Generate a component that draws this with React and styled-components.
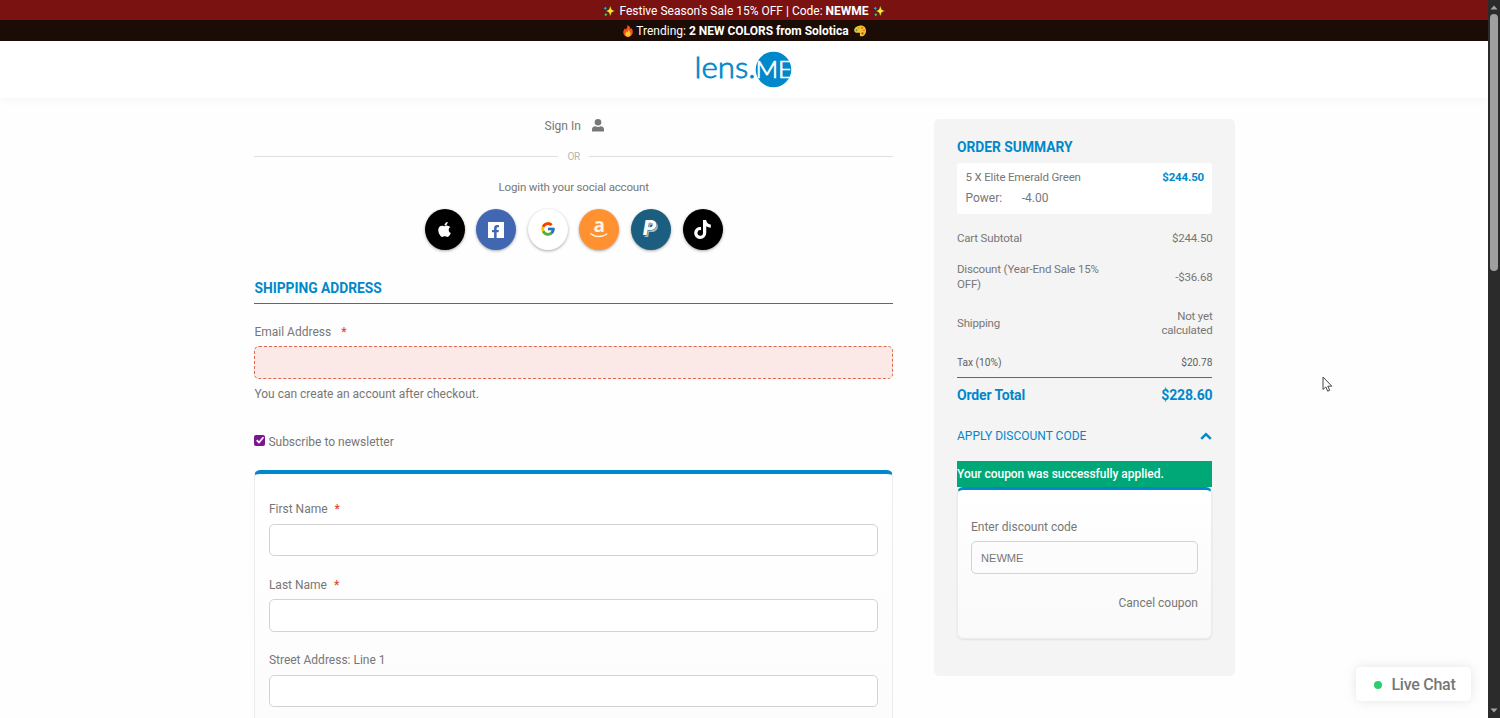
import styled, { createGlobalStyle } from "styled-components";
import { FaApple, FaFacebookF, FaTiktok } from "react-icons/fa";
import { FcGoogle } from "react-icons/fc";

const BLUE = "#0088cc";

const addressFields = [
  { label: "First Name", required: true },
  { label: "Last Name", required: true },
  { label: "Street Address: Line 1", required: false },
];

const socials = [
  { name: "apple", bg: "#000", icon: <FaApple size={17} /> },
  {
    name: "facebook",
    bg: "#4267b2",
    icon: (
      <FacebookTile>
        <FaFacebookF size={13} />
      </FacebookTile>
    ),
  },
  { name: "google", bg: "#fff", icon: <FcGoogle size={16} /> },
  { name: "amazon", bg: "#ff9130", icon: <AmazonIcon /> },
  { name: "paypal", bg: "#1b5e80", icon: <PaypalIcon /> },
  { name: "tiktok", bg: "#000", icon: <FaTiktok size={19} /> },
];

function FacebookTile({ children }) {
  return <FacebookBox>{children}</FacebookBox>;
}

function AmazonIcon() {
  return (
    <svg width="20" height="36" viewBox="0 -6 20 36" fontFamily="Open Sans" fontWeight="700" fontSize="19">
      <text x="4.500" y="14.500" fill="#fff3e2">a</text>
      <path d="M1.800 16.800c5 3.400 11 3.400 15.800.3" fill="none" stroke="#fff3e2" strokeWidth="1.400" strokeLinecap="round" />
    </svg>
  );
}

function PaypalIcon() {
  return (
    <svg width="28" height="28" viewBox="0 0 28 28" fontFamily="Roboto" fontWeight="900" fontStyle="italic" fontSize="21">
      <text x="7.500" y="21.500" fill="#9fbccb">P</text>
      <text x="6" y="20" fill="#fff" stroke="#1b5e80" strokeWidth=".8" paintOrder="stroke">P</text>
    </svg>
  );
}

function Sparkles() {
  return (
    <Emoji viewBox="0 0 12 12">
      <path d="M7.300.6 8.700 4.500 12 6 8.700 7.500 7.300 11.600 5.900 7.500 2.800 6 5.900 4.500Z" fill="#ffe53b" stroke="#3a2a05" strokeWidth=".5" />
      <path d="M2.300.8 3 2.500l1.600.8L3 4.100 2.300 5.800l-.7-1.700L0 3.300l1.600-.8Z" fill="#3fa9e8" stroke="#10222e" strokeWidth=".4" />
      <path d="M2.800 7.400 3.500 9l1.400.7-1.400.7-.7 1.600-.7-1.600L.7 9.700 2.100 9Z" fill="#5fd07a" stroke="#10281a" strokeWidth=".4" />
    </Emoji>
  );
}

function Flame() {
  return (
    <Emoji viewBox="0 0 12 12">
      <path d="M5.200 0C8 1.200 8.600 3 8.400 4.300c.5-.2.800-.7.900-1.300C10.600 4.500 11 6 10.700 7.700 10.300 10.300 8.400 12 6 12S1.500 10.400 1.300 7.800C1.100 5.700 2.200 4.500 2.900 3.200c.3.600.4 1 .9 1.300C4.900 3.300 5.700 2 5.200 0Z" fill="#f4511e" />
      <path d="M6.200 5c1.500 1.300 2.600 2.500 2.400 4.200C8.400 10.800 7.400 11.700 6 11.700S3.500 10.700 3.400 9.200C3.300 7.900 4.200 7.300 4.500 6.500c.4.300.6.600.7 1C5.900 6.800 6.300 6 6.200 5Z" fill="#ffca28" />
    </Emoji>
  );
}

function Palette() {
  return (
    <Emoji viewBox="0 0 12 12">
      <path d="M5.500.7C9 .2 12 2.200 12 5.700c0 3.300-2.100 5.600-4.400 5.600-1.500 0-2-.9-1.600-2.100.3-1-.2-1.700-1.200-1.500C3.200 8 .3 8.200.2 5.600.1 3 2.600 1.100 5.500.7Z" fill="#fbc02d" />
      <circle cx="2.600" cy="5.200" r="1" fill="#43a047" />
      <circle cx="4.600" cy="2.900" r="1" fill="#8bc34a" />
      <circle cx="8" cy="2.900" r=".9" fill="#f4511e" />
      <circle cx="10" cy="5.300" r=".9" fill="#ef6c00" />
      <circle cx="8.500" cy="8.400" r="1.100" fill="#8d5a00" />
    </Emoji>
  );
}

function Logo() {
  return (
    <svg width="104" height="38" viewBox="-4 0 104 38" fontFamily="Lato" fontWeight="300">
      <circle cx="77.500" cy="18.500" r="17.800" fill={BLUE} />
      <text x="-1.500" y="27.400" fontSize="30" textLength="61" lengthAdjust="spacingAndGlyphs" fill={BLUE} stroke={BLUE} strokeWidth=".8">
        lens.
      </text>
      <text x="59.500" y="26.800" fontSize="23.500" textLength="37" lengthAdjust="spacingAndGlyphs" fill="#fff" stroke="#fff" strokeWidth=".7">
        ME
      </text>
    </svg>
  );
}

function TextField({ label, required, invalid }) {
  return (
    <Field>
      <Label>
        {label}
        {required && <Star $gap={invalid ? 10 : 7}>*</Star>}
      </Label>
      <Input $invalid={invalid} />
    </Field>
  );
}

function App() {
  return (
    <>
      <GlobalStyle />
      <Window>
        <Page>
          <Banner $bg="#7a1212" $height={20}>
            <Sparkles />
            <BannerText>
              Festive Season's Sale 15% OFF | Code: <b>NEWME</b>
            </BannerText>
            <Sparkles />
          </Banner>
          <Banner $bg="#1c0c06" $height={21}>
            <Flame />
            <BannerText $shift={-1.5}>
              Trending: <b>2 NEW COLORS from Solotica</b>
            </BannerText>
            <Palette />
          </Banner>
          <Header>
            <Logo />
          </Header>

          <Main>
            <Checkout>
              <SignIn>
                Sign In
                <PersonIcon width="12" height="13" viewBox="0 0 12 13">
                  <circle cx="6" cy="3.300" r="3.300" />
                  <path d="M0 12.500V10.300C0 8.200 1.700 7.300 3.300 7.200c1.700 1 3.700 1 5.400 0C10.300 7.300 12 8.200 12 10.300v2.200Z" />
                </PersonIcon>
              </SignIn>
              <Divider>OR</Divider>
              <SocialTitle>Login with your social account</SocialTitle>
              <SocialRow>
                {socials.map((s) => (
                  <SocialButton key={s.name} $bg={s.bg} aria-label={s.name}>
                    {s.icon}
                  </SocialButton>
                ))}
              </SocialRow>

              <SectionTitle>SHIPPING ADDRESS</SectionTitle>
              <TextField label="Email Address" required invalid />
              <Note>You can create an account after checkout.</Note>
              <Subscribe>
                <CheckBox>
                  <svg width="10" height="10" viewBox="0 0 10 10" fill="none" stroke="#fff" strokeWidth="1.700">
                    <path d="M1.700 5.200 4 7.500 8.400 2.300" />
                  </svg>
                </CheckBox>
                Subscribe to newsletter
              </Subscribe>

              <AddressCard>
                {addressFields.map((f) => (
                  <TextField key={f.label} {...f} />
                ))}
              </AddressCard>
            </Checkout>

            <Summary>
              <SummaryTitle>ORDER SUMMARY</SummaryTitle>
              <ItemBox>
                <ItemRow>
                  <span>5 X Elite Emerald Green</span>
                  <ItemPrice>$244.50</ItemPrice>
                </ItemRow>
                <ItemOption>
                  <span>Power:</span>
                  <span>-4.00</span>
                </ItemOption>
              </ItemBox>

              <TotalRow $height={15} $top={17}>
                <span>Cart Subtotal</span>
                <span>$244.50</span>
              </TotalRow>
              <TotalRow $height={30} $top={16}>
                <TotalLabel>Discount (Year-End Sale 15% OFF)</TotalLabel>
                <span>-$36.68</span>
              </TotalRow>
              <TotalRow $height={30} $top={16}>
                <span>Shipping</span>
                <ShippingValue>Not yet calculated</ShippingValue>
              </TotalRow>
              <TaxRow>
                <span>Tax (10%)</span>
                <span>$20.78</span>
              </TaxRow>
              <GrandTotal>
                <span>Order Total</span>
                <span>$228.60</span>
              </GrandTotal>

              <DiscountToggle>
                APPLY DISCOUNT CODE
                <svg width="12" height="8" viewBox="0 0 12 8" fill="none" stroke={BLUE} strokeWidth="2.500">
                  <path d="M1.200 6.800 6 2.200l4.800 4.600" />
                </svg>
              </DiscountToggle>
              <Success>Your coupon was successfully applied.</Success>
              <CouponCard>
                <Label>Enter discount code</Label>
                <CouponInput defaultValue="NEWME" />
                <CancelCoupon>Cancel coupon</CancelCoupon>
              </CouponCard>
            </Summary>
          </Main>
        </Page>

        <Scrollbar>
          <Arrow viewBox="0 0 8 5">
            <path d="M4 .5 7.500 4.500H.5Z" />
          </Arrow>
          <Thumb />
          <Arrow viewBox="0 0 8 5">
            <path d="M4 4.500 7.500.5H.5Z" />
          </Arrow>
        </Scrollbar>

        <LiveChat>
          <Dot />
          Live Chat
        </LiveChat>
        <Cursor width="11" height="17" viewBox="0 0 11 17">
          <path d="M1 1v12.500l2.800-2.600 1.900 4.300 2-.9-1.900-4.100h4Z" fill="#fff" stroke="#444" strokeWidth="1" />
        </Cursor>
      </Window>
    </>
  );
}

export default App;

const GlobalStyle = createGlobalStyle`
  * {
    box-sizing: border-box;
  }
  body {
    margin: 0;
    background-color: #fefefe;
    color: #777;
    font-family: Roboto, "Liberation Sans", sans-serif;
    font-size: 12px;
    overflow: hidden;
  }
  svg {
    display: block;
    flex-shrink: 0;
  }
`;

const Window = styled.div`
  display: flex;
  height: 718px;
  overflow: hidden;
  position: relative;
`;

const Page = styled.div`
  flex: 1;
  height: 718px;
  overflow: hidden;
`;

const Banner = styled.div`
  height: ${(props) => props.$height}px;
  background-color: ${(props) => props.$bg};
  display: flex;
  align-items: center;
  justify-content: center;
  gap: 4px;
  color: #fff;
  padding-top: 1px;
`;

const BannerText = styled.span`
  margin-left: ${(props) => props.$shift || 0}px;
  margin-right: ${(props) => -(props.$shift || 0)}px;
`;

const Emoji = styled.svg`
  width: 12px;
  height: 12px;
`;

const Header = styled.header`
  height: 57px;
  display: flex;
  justify-content: center;
  padding-top: 10px;
  background-color: #fff;
  box-shadow: 0 3px 8px rgba(0, 0, 0, 0.035);
`;

const Main = styled.main`
  display: flex;
  align-items: flex-start;
  padding-left: 254.4px;
  gap: 41px;
`;

const Checkout = styled.section`
  width: 638.6px;
  padding-top: 18px;
`;

const SignIn = styled.div`
  height: 20px;
  display: flex;
  align-items: center;
  justify-content: center;
  gap: 11px;
  padding-left: 1px;
`;

const PersonIcon = styled.svg`
  margin-bottom: 2px;
  fill: #777;
`;

const Divider = styled.div`
  height: 20px;
  margin-top: 10px;
  display: flex;
  align-items: center;
  gap: 9px;
  font-size: 10px;
  letter-spacing: -0.3px;
  color: #b5b5b5;

  &::before,
  &::after {
    content: "";
    flex: 1;
    height: 1px;
    background-color: #dfdfdf;
  }
`;

const SocialTitle = styled.div`
  height: 20px;
  line-height: 20px;
  margin-top: 11px;
  text-align: center;
  font-size: 11.5px;
  letter-spacing: -0.16px;
`;

const SocialRow = styled.div`
  margin-top: 12px;
  display: flex;
  justify-content: center;
  gap: 11.6px;
`;

const SocialButton = styled.button`
  width: 40px;
  height: 41px;
  padding: 0 0 1px;
  border: none;
  border-radius: 50%;
  display: flex;
  align-items: center;
  justify-content: center;
  color: #fff;
  background-color: ${(props) => props.$bg};
  box-shadow: 0 1px 3px rgba(0, 0, 0, 0.35);
`;

const FacebookBox = styled.span`
  width: 16px;
  height: 16px;
  margin-top: 1px;
  display: flex;
  align-items: flex-end;
  justify-content: flex-end;
  padding-right: 2px;
  background-color: #fff;
  color: #4267b2;
`;

const SectionTitle = styled.h2`
  margin: 28px 0 18px;
  height: 26px;
  line-height: 20px;
  border-bottom: 1px solid ${BLUE};
  color: ${BLUE};
  font-size: 13.8px;
  font-weight: 700;
`;

const Field = styled.div`
  display: flex;
  flex-direction: column;
`;

const Label = styled.label`
  height: 20px;
  line-height: 20px;
`;

const Star = styled.span`
  margin-left: ${(props) => props.$gap}px;
  color: #e0492e;
  font-weight: 500;
`;

const Input = styled.input`
  height: 33px;
  margin-top: 4px;
  width: 100%;
  border-radius: 5px;
  outline: none;
  border: 1px ${(props) => (props.$invalid ? "dashed #e0674c" : "solid #d3d3d3")};
  background-color: ${(props) => (props.$invalid ? "#fae9e6" : "#fff")};
`;

const Note = styled.div`
  margin-top: 5px;
  height: 20px;
  line-height: 20px;
`;

const Subscribe = styled.div`
  margin-top: 28px;
  height: 20px;
  display: flex;
  align-items: center;
  gap: 3px;
`;

const CheckBox = styled.span`
  width: 11px;
  height: 11px;
  margin-bottom: 4px;
  display: flex;
  align-items: center;
  justify-content: center;
  border-radius: 2px;
  background-color: #7b1690;
`;

const AddressCard = styled.div`
  margin-top: 18px;
  padding: 25.4px 14px 60px 13.5px;
  border: 1px solid #ececec;
  border-top: 4px solid ${BLUE};
  border-radius: 6px;
  display: flex;
  flex-direction: column;
  gap: 18.5px;
  background: linear-gradient(#fff, #fcfcfc 250px);

  input {
    height: 32.7px;
    margin-top: 4.3px;
  }
`;

const Summary = styled.aside`
  width: 301px;
  height: 557px;
  margin-top: 21px;
  padding: 18px 22.5px 0 23px;
  border-radius: 5px;
  background-color: #f4f4f4;
`;

const SummaryTitle = styled.h2`
  margin: 0;
  height: 20px;
  line-height: 20px;
  color: ${BLUE};
  font-size: 13.8px;
  font-weight: 700;
`;

const ItemBox = styled.div`
  margin-top: 6px;
  height: 51px;
  padding: 4px 8.5px;
  border-radius: 3px;
  background-color: #fff;
  line-height: 20px;
`;

const ItemRow = styled.div`
  display: flex;
  justify-content: space-between;
  font-size: 11.5px;
  letter-spacing: -0.17px;
`;

const ItemPrice = styled.b`
  color: ${BLUE};
`;

const ItemOption = styled.div`
  display: flex;
  gap: 19.5px;
  margin-top: 1px;
`;

const TotalRow = styled.div`
  height: ${(props) => props.$height}px;
  margin-top: ${(props) => props.$top}px;
  display: flex;
  align-items: center;
  justify-content: space-between;
  line-height: 15px;
  font-size: 11.5px;
  letter-spacing: -0.18px;
`;

const TotalLabel = styled.span`
  width: 155px;
`;

const ShippingValue = styled.span`
  width: 60px;
  line-height: 14.5px;
  text-align: right;
`;

const TaxRow = styled.div`
  margin-top: 17px;
  height: 23px;
  padding-bottom: 8px;
  display: flex;
  align-items: flex-end;
  justify-content: space-between;
  border-bottom: 1px solid #666;
  color: #5f5f5f;
  font-size: 10.2px;
  line-height: 12px;
`;

const GrandTotal = styled.div`
  margin-top: 7px;
  height: 20px;
  line-height: 20px;
  display: flex;
  justify-content: space-between;
  color: ${BLUE};
  font-size: 14px;
  letter-spacing: -0.15px;
  font-weight: 700;
`;

const DiscountToggle = styled.div`
  margin-top: 21px;
  height: 20px;
  display: flex;
  align-items: center;
  justify-content: space-between;
  color: ${BLUE};
`;

const Success = styled.div`
  margin-top: 15px;
  height: 26px;
  line-height: 26px;
  background-color: #00a878;
  color: #fff;
  font-size: 11.95px;
  font-weight: 500;
`;

const CouponCard = styled.div`
  height: 152px;
  padding: 27px 13.5px 0 13px;
  display: flex;
  flex-direction: column;
  border: 1px solid #ebebeb;
  border-top: 3px solid ${BLUE};
  border-radius: 6px;
  background: linear-gradient(#fff, #f9f9f9);
  box-shadow: 0 1px 2px rgba(0, 0, 0, 0.08);
`;

const CouponInput = styled(Input)`
  padding: 0 9px;
  background-color: #fcfcfc;
  color: #777;
  font-family: "Liberation Sans", sans-serif;
  font-size: 11.1px;
`;

const CancelCoupon = styled.div`
  margin-top: 19px;
  line-height: 20px;
  text-align: right;
`;

const Scrollbar = styled.div`
  width: 12px;
  padding: 5px 0;
  display: flex;
  flex-direction: column;
  align-items: center;
  background-color: #2b2b2b;
`;

const Arrow = styled.svg`
  width: 8px;
  height: 5px;
  fill: #a5a5a5;
`;

const Thumb = styled.div`
  width: 8px;
  height: 257px;
  margin: 4px 0 auto;
  border-radius: 4px;
  background-color: #9f9f9f;
`;

const LiveChat = styled.div`
  position: absolute;
  left: 1356px;
  top: 667px;
  width: 115px;
  height: 34px;
  padding-left: 18px;
  display: flex;
  align-items: center;
  gap: 9.5px;
  border-radius: 5px;
  background-color: #fff;
  box-shadow: 0 0 12px rgba(0, 0, 0, 0.1);
  font-size: 16px;
  letter-spacing: -0.27px;
  font-weight: 500;
  padding-top: 1px;
`;

const Dot = styled.span`
  width: 8px;
  height: 8px;
  border-radius: 50%;
  background-color: #2ecc71;
`;

const Cursor = styled.svg`
  position: absolute;
  left: 1322px;
  top: 376px;
`;
